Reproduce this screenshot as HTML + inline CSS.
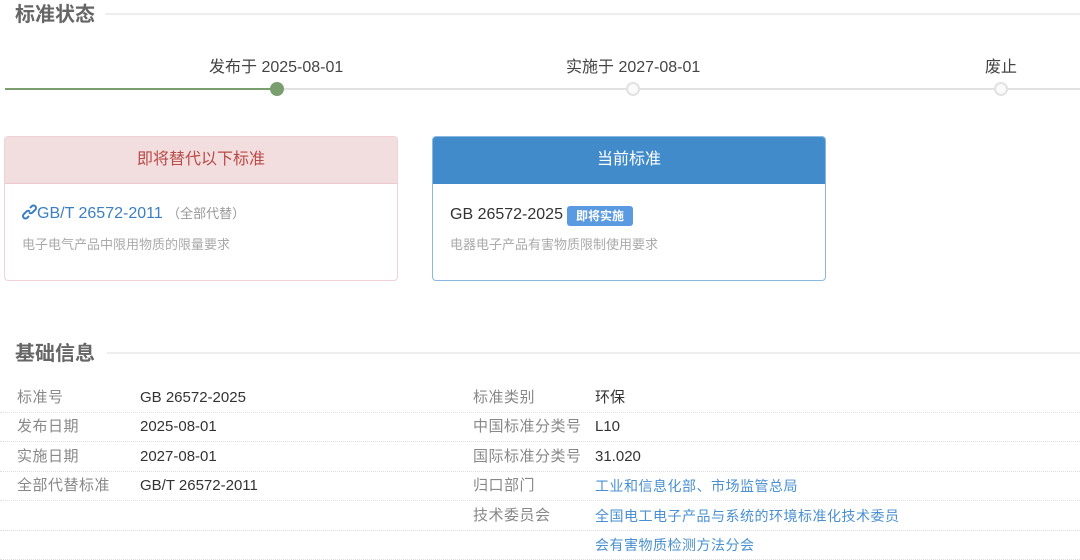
<!DOCTYPE html>
<html><head><meta charset="utf-8"><style>
*{margin:0;padding:0;box-sizing:border-box}
body{width:1080px;height:560px;background:#fff;font-family:"Liberation Sans","Noto Sans CJK SC",sans-serif;position:relative;overflow:hidden;color:#333}
.a{position:absolute;white-space:nowrap}
.t{font-size:20px;font-weight:bold;color:#666;line-height:24px}
.hl{position:absolute;height:2px;background:#eee}
.lab{font-size:16px;color:#444;line-height:20px}
.card{position:absolute;top:136px;width:394px;height:145px;border-radius:4px;overflow:hidden}
.hd{height:47px;line-height:46px;text-align:center;font-size:16px}
.row{position:absolute;left:0;width:1080px;height:1px;border-top:1px dotted #ddd}
.k{font-size:15px;color:#888;line-height:20px;letter-spacing:0.5px}
.v{font-size:15px;color:#333;line-height:20px}
.l{font-size:14px;color:#4a90d0;line-height:20px;letter-spacing:0.5px}
</style></head><body>
<div class="a t" style="left:15px;top:3px">标准状态</div>
<div class="hl" style="left:105px;top:13px;width:975px"></div>

<div class="a lab" style="left:209px;top:58px">发布于 2025-08-01</div>
<div class="a lab" style="left:566px;top:58px">实施于 2027-08-01</div>
<div class="a lab" style="left:985px;top:58px">废止</div>
<div class="hl" style="left:5px;top:88px;width:1075px;background:#e2e2e2"></div>
<div class="hl" style="left:5px;top:88px;width:272px;background:#7a9e6e"></div>
<div class="a" style="left:270px;top:82px;width:14px;height:14px;border-radius:50%;background:#7a9e6e"></div>
<div class="a" style="left:626px;top:82px;width:14px;height:14px;border-radius:50%;background:#fafafa;border:2px solid #e2e2e2"></div>
<div class="a" style="left:994px;top:82px;width:14px;height:14px;border-radius:50%;background:#fafafa;border:2px solid #e2e2e2"></div>

<div class="card" style="left:4px;border:1px solid #f0d2d8">
<div class="hd" style="background:#f2dede;color:#b94a48;border-bottom:1px solid #ecc8cf">即将替代以下标准</div>
<div class="a" style="left:17px;top:67px;font-size:16px;color:#3a7fc4;line-height:20px"><svg width="15" height="16" viewBox="0 0 15 16" style="vertical-align:-2px"><path d="M8 4 L10 2 a2.5 2.5 0 0 1 3.5 3.5 L10.5 8.5 a2.5 2.5 0 0 1 -3.5 0 M7 12 L5 14 a2.5 2.5 0 0 1 -3.5 -3.5 L4.5 7.5 a2.5 2.5 0 0 1 3.5 0" fill="none" stroke="#3a7fc4" stroke-width="2"/></svg>GB/T 26572-2011 <span style="font-size:13px;color:#999">（全部代替）</span></div>
<div class="a" style="left:17px;top:97px;font-size:13px;color:#aaa">电子电气产品中限用物质的限量要求</div>
</div>

<div class="card" style="left:432px;border:1px solid #8ab8e0">
<div class="hd" style="background:#428bca;color:#fff">当前标准</div>
<div class="a" style="left:17px;top:68px;font-size:16px;color:#333;line-height:20px">GB 26572-2025</div>
<div class="a" style="left:134px;top:69px;width:66px;height:20px;background:#5a9ae0;border-radius:3px;color:#fff;font-size:12px;font-weight:bold;text-align:center;line-height:20px">即将实施</div>
<div class="a" style="left:17px;top:97px;font-size:13px;color:#aaa">电器电子产品有害物质限制使用要求</div>
</div>

<div class="a t" style="left:15px;top:342px">基础信息</div>
<div class="hl" style="left:107px;top:352px;width:973px"></div>

<div class="row" style="top:412px"></div>
<div class="row" style="top:441px"></div>
<div class="row" style="top:471px"></div>
<div class="row" style="top:500px"></div>
<div class="row" style="top:530px"></div>
<div class="row" style="top:559px"></div>

<div class="a k" style="left:17px;top:388px">标准号</div><div class="a v" style="left:140px;top:388px">GB 26572-2025</div>
<div class="a k" style="left:17px;top:417px">发布日期</div><div class="a v" style="left:140px;top:417px">2025-08-01</div>
<div class="a k" style="left:17px;top:447px">实施日期</div><div class="a v" style="left:140px;top:447px">2027-08-01</div>
<div class="a k" style="left:17px;top:476px">全部代替标准</div><div class="a v" style="left:140px;top:476px">GB/T 26572-2011</div>

<div class="a k" style="left:473px;top:388px">标准类别</div><div class="a v" style="left:595px;top:388px">环保</div>
<div class="a k" style="left:473px;top:417px">中国标准分类号</div><div class="a v" style="left:595px;top:417px">L10</div>
<div class="a k" style="left:473px;top:447px">国际标准分类号</div><div class="a v" style="left:595px;top:447px">31.020</div>
<div class="a k" style="left:473px;top:476px">归口部门</div><div class="a l" style="left:595px;top:476px">工业和信息化部、市场监管总局</div>
<div class="a k" style="left:473px;top:506px">技术委员会</div><div class="a l" style="left:595px;top:506px">全国电工电子产品与系统的环境标准化技术委员</div>
<div class="a l" style="left:595px;top:535px">会有害物质检测方法分会</div>
</body></html>
